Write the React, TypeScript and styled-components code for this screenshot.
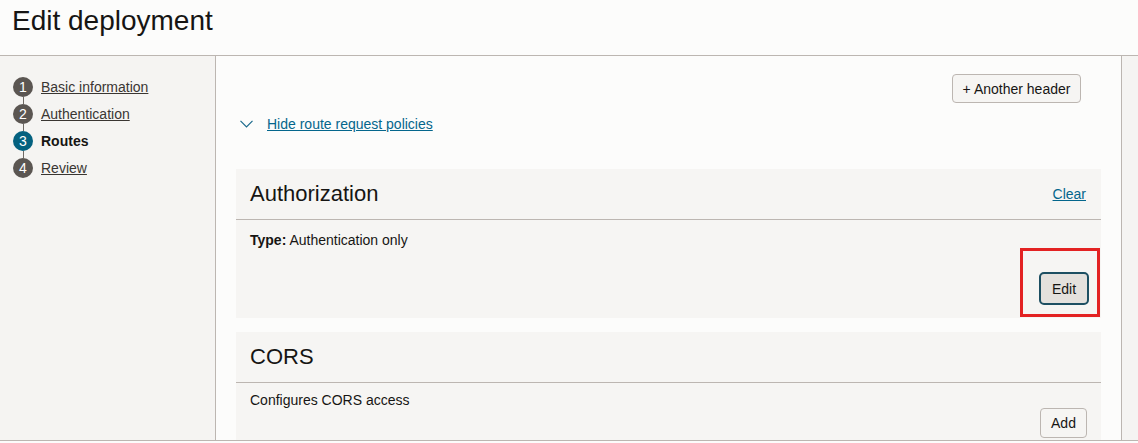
import * as React from "react"
import styled, { createGlobalStyle } from "styled-components"

const GlobalStyle = createGlobalStyle`
    html, body {
        margin: 0;
        padding: 0;
        background: #fcfcfb;
        font-family: "Liberation Sans", Arial, sans-serif;
        color: #161513;
    }
`

const Page = styled.div`
    display: flex;
    flex-direction: column;
    width: 1138px;
    height: 443px;
    overflow: hidden;
`

const Header = styled.header`
    height: 56px;
    border-bottom: 1px solid #bcb6b1;
    background: #fcfcfb;
    padding: 5px 12px 0;
    box-sizing: border-box;
    flex-shrink: 0;
`

const Title = styled.h1`
    margin: 0;
    font-size: 28px;
    line-height: 32px;
    font-weight: 400;
    color: #161513;
`

const Body = styled.div`
    display: flex;
    height: 384px;
    border-bottom: 1px solid #bcb6b1;
    overflow: hidden;
    flex-shrink: 0;
`

const Nav = styled.nav`
    width: 216px;
    flex-shrink: 0;
    background: #f5f4f2;
    border-right: 1px solid #bcb6b1;
    padding: 17px 0 0 13px;
    box-sizing: border-box;
`

const StepList = styled.ol`
    list-style: none;
    margin: 0;
    padding: 0;
`

const Step = styled.li`
    display: flex;
    align-items: center;
    gap: 8px;
    height: 27px;
`

const Marker = styled.span<{ $active?: boolean; $last?: boolean }>`
    position: relative;
    width: 20px;
    height: 20px;
    border-radius: 50%;
    background: ${(p) => (p.$active ? "#04617f" : "#5b5652")};
    color: #ffffff;
    font-size: 14px;
    line-height: 20px;
    text-align: center;
    flex-shrink: 0;
    &::after {
        content: "";
        display: ${(p) => (p.$last ? "none" : "block")};
        position: absolute;
        left: 9.5px;
        top: 20px;
        width: 1px;
        height: 7px;
        background: #6f6a65;
    }
`

const StepLink = styled.a`
    font-size: 14px;
    color: #3a3632;
    text-decoration: underline;
    cursor: pointer;
`

const StepCurrent = styled.span`
    font-size: 14px;
    font-weight: 700;
    color: #161513;
`

const Main = styled.main`
    flex: 1;
    background: #fcfcfb;
    border-right: 1px solid #bcb6b1;
    padding: 18px 20px 0;
    box-sizing: border-box;
    display: flex;
    flex-direction: column;
`

const Gutter = styled.div`
    width: 16px;
    flex-shrink: 0;
    background: #f5f4f2;
`

const ButtonRow = styled.div`
    display: flex;
    justify-content: flex-end;
    padding-right: 20px;
`

const Button = styled.button<{ $focused?: boolean; $w: number; $h: number }>`
    width: ${(p) => p.$w}px;
    height: ${(p) => p.$h}px;
    font-family: "Liberation Sans", Arial, sans-serif;
    font-size: 14px;
    color: #161513;
    background: ${(p) => (p.$focused ? "#e4e1dd" : "#f6f5f3")};
    border: ${(p) => (p.$focused ? "2px solid #1d4f62" : "1px solid #bcb6b1")};
    border-radius: ${(p) => (p.$focused ? "5px" : "4px")};
    padding: 0;
    cursor: pointer;
`

const ToggleRow = styled.div`
    display: flex;
    align-items: center;
    gap: 14px;
    height: 22px;
    margin-top: 13px;
    padding-left: 4px;
`

const Link = styled.a`
    font-size: 14px;
    color: #04668c;
    text-decoration: underline;
    cursor: pointer;
`

const Panel = styled.section<{ $top: number }>`
    background: #f6f5f3;
    margin-top: ${(p) => p.$top}px;
    flex-shrink: 0;
`

const PanelHeader = styled.div`
    display: flex;
    align-items: center;
    justify-content: space-between;
    height: 50px;
    padding: 0 15px 0 14px;
    border-bottom: 1px solid #bcb6b1;
`

const PanelTitle = styled.h2`
    margin: 0;
    font-size: 22px;
    font-weight: 400;
    color: #161513;
`

const PanelBody = styled.div<{ $pad: string }>`
    display: flex;
    flex-direction: column;
    padding: ${(p) => p.$pad};
`

const Text = styled.div`
    font-size: 14px;
    line-height: 16px;
    color: #161513;
`

const Highlight = styled.div`
    align-self: flex-end;
    border: 3px solid #e32222;
    padding: 21px 8px 9px 16px;
`

const Actions = styled.div`
    display: flex;
    justify-content: flex-end;
`

const Chevron = () => (
    <svg width="13" height="8" viewBox="0 0 13 8" fill="none">
        <path d="M0.5 0.8 L6.5 6.8 L12.5 0.8" stroke="#1b6a8c" strokeWidth="1.2" />
    </svg>
)

const steps = ["Basic information", "Authentication", "Routes", "Review"]

export default function App() {
    const current = 2
    return (
        <Page>
            <GlobalStyle />
            <Header>
                <Title>Edit deployment</Title>
            </Header>
            <Body>
                <Nav>
                    <StepList>
                        {steps.map((s, i) => (
                            <Step key={s}>
                                <Marker $active={i === current} $last={i === steps.length - 1}>
                                    {i + 1}
                                </Marker>
                                {i === current ? <StepCurrent>{s}</StepCurrent> : <StepLink>{s}</StepLink>}
                            </Step>
                        ))}
                    </StepList>
                </Nav>
                <Main>
                    <ButtonRow>
                        <Button $w={129} $h={29}>+ Another header</Button>
                    </ButtonRow>
                    <ToggleRow>
                        <Chevron />
                        <Link>Hide route request policies</Link>
                    </ToggleRow>
                    <Panel $top={37}>
                        <PanelHeader>
                            <PanelTitle>Authorization</PanelTitle>
                            <Link>Clear</Link>
                        </PanelHeader>
                        <PanelBody $pad="12px 1px 1px 14px">
                            <Text>
                                <b>Type:</b> Authentication only
                            </Text>
                            <Highlight>
                                <Button $focused $w={50} $h={33}>Edit</Button>
                            </Highlight>
                        </PanelBody>
                    </Panel>
                    <Panel $top={14}>
                        <PanelHeader>
                            <PanelTitle>CORS</PanelTitle>
                        </PanelHeader>
                        <PanelBody $pad="9px 14px 8px 14px">
                            <Text>Configures CORS access</Text>
                            <Actions>
                                <Button $w={47} $h={30}>Add</Button>
                            </Actions>
                        </PanelBody>
                    </Panel>
                </Main>
                <Gutter />
            </Body>
        </Page>
    )
}
